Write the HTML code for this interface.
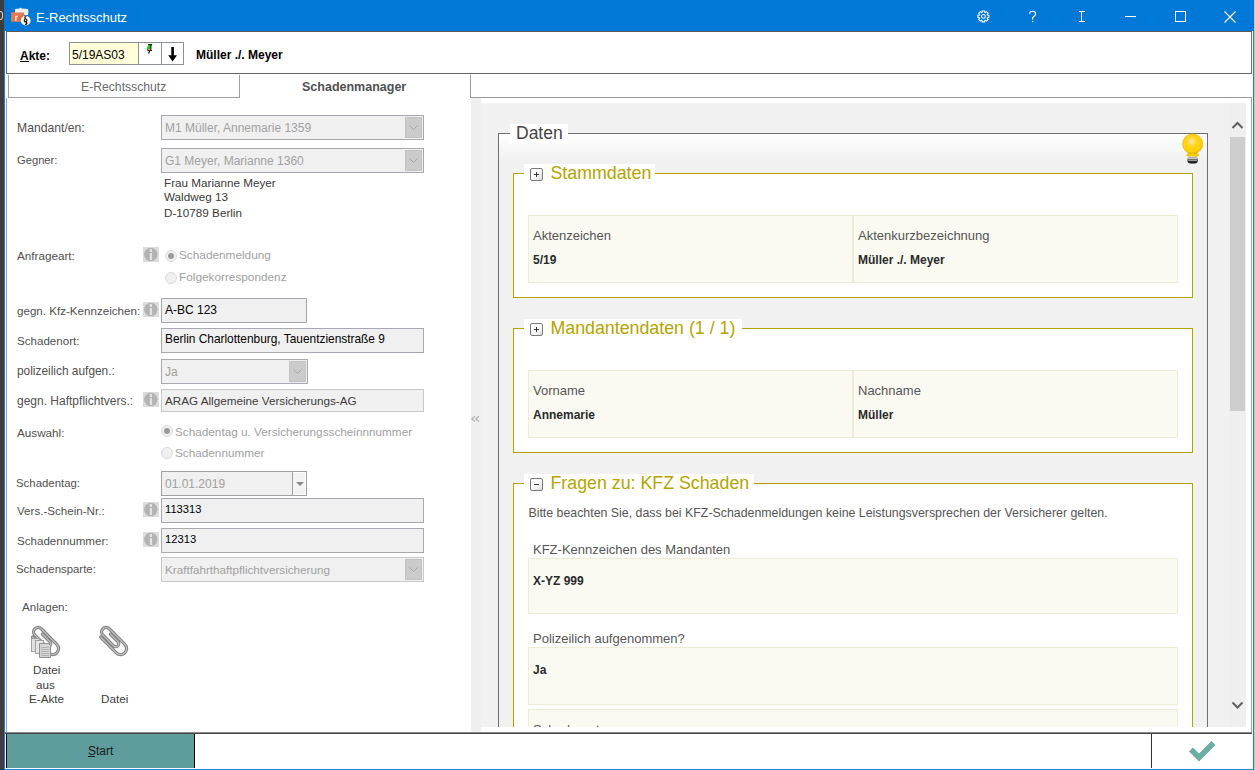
<!DOCTYPE html>
<html><head><meta charset="utf-8">
<style>
*{box-sizing:border-box;margin:0;padding:0}
html,body{width:1255px;height:770px;overflow:hidden;background:#fff;font-family:"Liberation Sans",sans-serif}
.a{position:absolute}
.t{position:absolute;white-space:nowrap;line-height:1}
#strip{left:0;top:0;width:4px;height:770px;background:#3d3d3d}
#win{left:4px;top:0;width:1250px;height:770px;background:#fff;border-left:1px solid #1a84d8;border-right:1px solid #1a84d8;border-bottom:1px solid #1a84d8}
#title{left:4px;top:0;width:1250px;height:31px;background:#0078d7}
.lbl{position:absolute;white-space:nowrap;line-height:1;font-size:12px;color:#505050}
.box{position:absolute;border:1px solid #a8a8b0;background:#f0f0f0}
.dd{position:absolute;background:#cbcbcb;border:1px solid #c2c2c2}
.dis{color:#a0a0a0}
.info{position:absolute;width:16px;height:15px;background:#dcdcdc}
.radio{position:absolute;width:12px;height:12px;border-radius:50%;border:1px solid #dadada;background:#f0f0f0}
.radio.on:after{content:"";position:absolute;left:2px;top:2px;width:6px;height:6px;border-radius:50%;background:#9a9a9a}
.pm{position:absolute;width:13px;height:13px;border:1px solid #7a7a7a;border-radius:2px;background:linear-gradient(135deg,#fff 40%,#dcdcdc)}
.h{font-family:"Liberation Sans",sans-serif}
</style></head><body>
<div id="strip" class="a"></div><div class="a" style="left:-2px;top:11px;width:5px;height:9px;border:1px solid #e0e0ea;border-radius:0 3px 3px 0;border-right-color:#e8d8a0"></div>
<div id="win" class="a"></div><div class="a" style="left:1254px;top:0;width:1px;height:770px;background:#c9c1b8"></div>
<div id="title" class="a"></div>
<div class="t" style="left:36px;top:11px;font-size:13px;color:#fff">E-Rechtsschutz</div>

<!-- Akte row -->
<div class="a" style="left:6px;top:31px;width:1246px;height:43px;border:1px solid #6a6a6a;border-bottom:1px solid #646464;border-top:1px solid #5a5a5a"></div>
<div class="t" style="left:20px;top:50px;font-size:12px;font-weight:bold;color:#000">Akte:</div>
<div class="a" style="left:20px;top:61px;width:9px;height:1px;background:#000"></div>
<div class="a" style="left:69px;top:42px;width:70px;height:23px;background:#ffffd9;border:1px solid #8c9398"></div>
<div class="t" style="left:72px;top:49px;font-size:12px;color:#000">5/19AS03</div>
<div class="a" style="left:138px;top:42px;width:24px;height:23px;background:#fff;border:1px solid #8c9398"></div>
<div class="a" style="left:161px;top:42px;width:23px;height:23px;background:#fff;border:1px solid #8c9398"></div>
<div class="t" style="left:196px;top:49px;font-size:12px;font-weight:bold;color:#000">Müller ./. Meyer</div>

<!-- tabs -->
<div class="a" style="left:8px;top:75px;width:232px;height:23px;border:1px solid #a0a0a0;border-top:none"></div>
<div class="t" style="left:81px;top:81px;font-size:12.2px;color:#6a6a6a">E-Rechtsschutz</div>
<div class="a" style="left:470px;top:75px;width:782px;height:23px;border-left:1px solid #999;border-bottom:1px solid #999"></div>
<div class="t" style="left:302px;top:80.7px;font-size:12.5px;font-weight:bold;color:#505050">Schadenmanager</div>

<!-- left panel border -->
<div class="a" style="left:6px;top:98px;width:1px;height:634px;background:#a0a0a0"></div>
<div class="a" style="left:1251px;top:97px;width:1px;height:635px;background:#a0a0a0"></div>

<!-- bottom bar -->
<div class="a" style="left:5px;top:732px;width:1247px;height:1px;background:#8a8a8a"></div><div class="a" style="left:5px;top:733px;width:1247px;height:1px;background:#454545"></div>
<div class="a" style="left:6px;top:734px;width:189px;height:34px;background:#5f9c9c;border-left:1px solid #000;border-right:1px solid #000"></div>
<div class="t" style="left:88px;top:745px;font-size:12px;color:#1a1a1a">Start</div><div class="a" style="left:88px;top:756px;width:7px;height:1px;background:#1a1a1a"></div>
<div class="a" style="left:1151px;top:734px;width:1px;height:34px;background:#333"></div>

<!-- right panel content -->
<div class="a" style="left:471px;top:98px;width:775px;height:629px;background:#f0f0f0"></div>
<div class="a" style="left:481px;top:98px;width:765px;height:5px;background:#fff"></div>


<!-- LEFT PANEL -->
<div class="lbl" style="left:17px;top:122px;font-size:12.2px">Mandant/en:</div>
<div class="box" style="left:161px;top:115px;width:263px;height:25px"></div>
<div class="dd" style="left:405px;top:117px;width:17px;height:21px"><svg width="15" height="19" style="position:absolute;left:0;top:0"><path d="M3.5,7.5 L7.5,11.5 L11.5,7.5" fill="none" stroke="#a3a3a3" stroke-width="1"/></svg></div>
<div class="t dis" style="left:165px;top:122px;font-size:12px">M1 Müller, Annemarie 1359</div>

<div class="lbl" style="left:17px;top:155px;font-size:11.2px">Gegner:</div>
<div class="box" style="left:161px;top:148px;width:263px;height:25px"></div>
<div class="dd" style="left:405px;top:150px;width:17px;height:21px"><svg width="15" height="19" style="position:absolute;left:0;top:0"><path d="M3.5,7.5 L7.5,11.5 L11.5,7.5" fill="none" stroke="#a3a3a3" stroke-width="1"/></svg></div>
<div class="t dis" style="left:165px;top:155px;font-size:12px">G1 Meyer, Marianne 1360</div>

<div class="t" style="left:164px;top:176.5px;font-size:11.7px;color:#3a3a3a">Frau Marianne Meyer</div>
<div class="t" style="left:164px;top:191px;font-size:11.7px;color:#3a3a3a">Waldweg 13</div>
<div class="t" style="left:164px;top:206.5px;font-size:11.7px;color:#3a3a3a">D-10789 Berlin</div>

<div class="lbl" style="left:17px;top:249.5px;font-size:11.7px">Anfrageart:</div>
<div class="info" style="left:143px;top:247px"><svg width="16" height="15" style="position:absolute;left:0;top:0"><circle cx="7.8" cy="7.5" r="6.7" fill="#b3b3b3"/><path d="M6.4,2.6 L8.1,1.9 H9 V4.9 H6.9 Z" fill="#e2e2e2"/><rect x="6.8" y="6.1" width="2.3" height="6.9" fill="#e2e2e2"/></svg></div>
<div class="radio on" style="left:165px;top:250px"></div>
<div class="t dis" style="left:179px;top:249.5px;font-size:11.8px">Schadenmeldung</div>
<div class="radio" style="left:165px;top:272px"></div>
<div class="t dis" style="left:179px;top:271.5px;font-size:11.8px">Folgekorrespondenz</div>

<div class="lbl" style="left:17px;top:304.5px;font-size:11.6px">gegn. Kfz-Kennzeichen:</div>
<div class="info" style="left:143px;top:302px"><svg width="16" height="15" style="position:absolute;left:0;top:0"><circle cx="7.8" cy="7.5" r="6.7" fill="#b3b3b3"/><path d="M6.4,2.6 L8.1,1.9 H9 V4.9 H6.9 Z" fill="#e2e2e2"/><rect x="6.8" y="6.1" width="2.3" height="6.9" fill="#e2e2e2"/></svg></div>
<div class="box" style="left:161px;top:298px;width:146px;height:25px"></div>
<div class="t" style="left:165px;top:304px;font-size:12px;color:#000">A-BC 123</div>

<div class="lbl" style="left:17px;top:334.5px;font-size:11.6px">Schadenort:</div>
<div class="box" style="left:161px;top:328px;width:263px;height:25px"></div>
<div class="t" style="left:165px;top:334px;font-size:11.9px;color:#000">Berlin Charlottenburg, Tauentzienstraße 9</div>

<div class="lbl" style="left:17px;top:365.5px;font-size:11.9px">polizeilich aufgen.:</div>
<div class="box" style="left:161px;top:359px;width:147px;height:25px"></div>
<div class="dd" style="left:289px;top:361px;width:17px;height:21px"><svg width="15" height="19" style="position:absolute;left:0;top:0"><path d="M3.5,7.5 L7.5,11.5 L11.5,7.5" fill="none" stroke="#a3a3a3" stroke-width="1"/></svg></div>
<div class="t dis" style="left:165px;top:365.5px;font-size:12px">Ja</div>

<div class="lbl" style="left:17px;top:395px;font-size:12px">gegn. Haftpflichtvers.:</div>
<div class="info" style="left:143px;top:392px"><svg width="16" height="15" style="position:absolute;left:0;top:0"><circle cx="7.8" cy="7.5" r="6.7" fill="#b3b3b3"/><path d="M6.4,2.6 L8.1,1.9 H9 V4.9 H6.9 Z" fill="#e2e2e2"/><rect x="6.8" y="6.1" width="2.3" height="6.9" fill="#e2e2e2"/></svg></div>
<div class="box" style="left:161px;top:389px;width:263px;height:23px;border-color:#c8c8c8"></div>
<div class="t" style="left:165px;top:394.5px;font-size:11.7px;color:#3c3c3c">ARAG Allgemeine Versicherungs-AG</div>

<div class="lbl" style="left:17px;top:427px;font-size:11.7px">Auswahl:</div>
<div class="radio on" style="left:161px;top:425px"></div>
<div class="t dis" style="left:175px;top:425.5px;font-size:11.75px">Schadentag u. Versicherungsscheinnnummer</div>
<div class="radio" style="left:161px;top:447px"></div>
<div class="t dis" style="left:175px;top:447px;font-size:11.75px">Schadennummer</div>

<div class="lbl" style="left:16px;top:478px;font-size:11.4px">Schadentag:</div>
<div class="box" style="left:161px;top:471px;width:146px;height:25px;border-color:#a0a0a0"></div>
<div class="a" style="left:292px;top:472px;width:1px;height:23px;background:#a0a0a0"></div>
<div class="a" style="left:293px;top:472px;width:13px;height:23px;background:#f3f3f3;border:1px solid #fff;border-left:none"></div><div class="a" style="left:295.5px;top:482px;width:0;height:0;border-left:4px solid transparent;border-right:4px solid transparent;border-top:4px solid #888"></div>
<div class="t dis" style="left:165px;top:477.5px;font-size:12px">01.01.2019</div>

<div class="lbl" style="left:17px;top:505px;font-size:11.6px">Vers.-Schein-Nr.:</div>
<div class="info" style="left:143px;top:502px"><svg width="16" height="15" style="position:absolute;left:0;top:0"><circle cx="7.8" cy="7.5" r="6.7" fill="#b3b3b3"/><path d="M6.4,2.6 L8.1,1.9 H9 V4.9 H6.9 Z" fill="#e2e2e2"/><rect x="6.8" y="6.1" width="2.3" height="6.9" fill="#e2e2e2"/></svg></div>
<div class="box" style="left:161px;top:498px;width:263px;height:25px"></div>
<div class="t" style="left:165px;top:504px;font-size:11.2px;color:#000">113313</div>

<div class="lbl" style="left:17px;top:535px;font-size:11.6px">Schadennummer:</div>
<div class="info" style="left:143px;top:532px"><svg width="16" height="15" style="position:absolute;left:0;top:0"><circle cx="7.8" cy="7.5" r="6.7" fill="#b3b3b3"/><path d="M6.4,2.6 L8.1,1.9 H9 V4.9 H6.9 Z" fill="#e2e2e2"/><rect x="6.8" y="6.1" width="2.3" height="6.9" fill="#e2e2e2"/></svg></div>
<div class="box" style="left:161px;top:528px;width:263px;height:25px"></div>
<div class="t" style="left:165px;top:534px;font-size:11.2px;color:#000">12313</div>

<div class="lbl" style="left:16px;top:564px;font-size:11.4px">Schadensparte:</div>
<div class="box" style="left:161px;top:557px;width:263px;height:25px;border-color:#c8c8c8"></div>
<div class="dd" style="left:405px;top:559px;width:17px;height:21px"><svg width="15" height="19" style="position:absolute;left:0;top:0"><path d="M3.5,7.5 L7.5,11.5 L11.5,7.5" fill="none" stroke="#a3a3a3" stroke-width="1"/></svg></div>
<div class="t dis" style="left:165px;top:563.5px;font-size:11.7px">Kraftfahrthaftpflichtversicherung</div>

<div class="lbl" style="left:22px;top:600.5px;font-size:11.6px">Anlagen:</div>
<div class="t" style="left:33px;top:663.5px;font-size:11.7px;color:#404040">Datei</div>
<div class="t" style="left:36px;top:678.5px;font-size:11.7px;color:#404040">aus</div>
<div class="t" style="left:29px;top:693px;font-size:11.7px;color:#404040">E-Akte</div>
<div class="t" style="left:101px;top:693px;font-size:11.7px;color:#404040">Datei</div>



<svg class="a" style="left:94px;top:622px" width="40" height="40" viewBox="0 0 40 40">
  <g transform="translate(20,20) rotate(-45)">
    <path d="M-6,-13 V9.3 A6,6 0 0 0 6,9.3 V-12.7 A4.5,4.5 0 0 0 -3,-12.7 V2.4 A3,3 0 0 0 3,2.4 V-8" fill="none" stroke="#878787" stroke-width="3.3" stroke-linecap="round"/>
    <path d="M-6,-13 V9.3 A6,6 0 0 0 6,9.3 V-12.7 A4.5,4.5 0 0 0 -3,-12.7 V2.4 A3,3 0 0 0 3,2.4 V-8" fill="none" stroke="#c8c8c8" stroke-width="1" stroke-linecap="round"/>
  </g>
</svg>
<svg class="a" style="left:26px;top:622px" width="40" height="40" viewBox="0 0 40 40">
  <g transform="translate(20,20) rotate(-45)">
    <path d="M-6,-13 V9.3 A6,6 0 0 0 6,9.3 V-12.7 A4.5,4.5 0 0 0 -3,-12.7 V2.4 A3,3 0 0 0 3,2.4 V-8" fill="none" stroke="#878787" stroke-width="3.3" stroke-linecap="round"/>
    <path d="M-6,-13 V9.3 A6,6 0 0 0 6,9.3 V-12.7 A4.5,4.5 0 0 0 -3,-12.7 V2.4 A3,3 0 0 0 3,2.4 V-8" fill="none" stroke="#c8c8c8" stroke-width="1" stroke-linecap="round"/>
  </g>
  <rect x="5.5" y="16.5" width="8" height="13" fill="#e0e0e0" stroke="#a0a0a0" stroke-width="1"/>
  <rect x="9.5" y="18.5" width="8" height="13" fill="#e4e4e4" stroke="#a0a0a0" stroke-width="1"/>
  <path d="M13.5,21.5 H22.5 L24.5,23.5 V35.5 H13.5 Z" fill="#d6d6d6" stroke="#909090" stroke-width="1"/>
  <path d="M15,25.5 H23 M15,27.5 H23 M15,29.5 H23 M15,31.5 H23 M15,33.5 H23" stroke="#a8a8a8" stroke-width="0.8"/>
</svg>

<!-- RIGHT PANEL -->
<div class="a" style="left:471px;top:98px;width:10px;height:634px;background:#efefef"></div>
<svg class="a" style="left:470px;top:415px" width="11" height="8"><path d="M5,1.2 L1.8,3.9 L5,6.6 M9,1.2 L5.8,3.9 L9,6.6" fill="none" stroke="#b2b2b2" stroke-width="1.3"/></svg>
<div id="clip" class="a" style="left:481px;top:103px;width:748px;height:624px;overflow:hidden;background:#f1f1f1">
  <!-- Daten box (coords relative to 481,103) -->
  <div class="a" style="left:17px;top:30px;width:710px;height:700px;border:1px solid #6e6e6e;border-bottom:none;background:linear-gradient(#ffffff 0px,#f1f1f1 26px)"></div>
  <div class="a" style="left:29px;top:21px;width:58px;height:20px;background:#fff"></div>
  <div class="t" style="left:35px;top:22.2px;font-size:17.5px;color:#454545">Daten</div>

  <div class="a" style="left:32px;top:70px;width:680px;height:125px;border:1px solid #b5a400;background:#fff"></div>
  <div class="a" style="left:43px;top:61px;width:131px;height:20px;background:#fff"></div>
  <div class="pm" style="left:49px;top:65px"><div class="a" style="left:3px;top:5px;width:5px;height:1px;background:#333"></div><div class="a" style="left:5px;top:3px;width:1px;height:5px;background:#333"></div></div>
  <div class="t" style="left:69.5px;top:61.6px;font-size:17.8px;color:#b5a400">Stammdaten</div>
  <div class="a" style="left:47px;top:112px;width:650px;height:68px;border:1px solid #efebd6;background:#fafaf3"></div>
  <div class="a" style="left:371px;top:112px;width:2px;height:68px;background:#efebd6"></div>
  <div class="t" style="left:52px;top:125.8px;font-size:13px;color:#555">Aktenzeichen</div>
  <div class="t" style="left:52px;top:151px;font-size:12px;font-weight:bold;color:#2a2a2a">5/19</div>
  <div class="t" style="left:377px;top:125.8px;font-size:13px;color:#555">Aktenkurzbezeichnung</div>
  <div class="t" style="left:377px;top:151px;font-size:12px;font-weight:bold;color:#2a2a2a">Müller ./. Meyer</div>
  <div class="a" style="left:32px;top:225px;width:680px;height:125px;border:1px solid #b5a400;background:#fff"></div>
  <div class="a" style="left:43px;top:216px;width:218px;height:20px;background:#fff"></div>
  <div class="pm" style="left:49px;top:220px"><div class="a" style="left:3px;top:5px;width:5px;height:1px;background:#333"></div><div class="a" style="left:5px;top:3px;width:1px;height:5px;background:#333"></div></div>
  <div class="t" style="left:69.5px;top:216.6px;font-size:17.8px;color:#b5a400">Mandantendaten (1 / 1)</div>
  <div class="a" style="left:47px;top:267px;width:650px;height:68px;border:1px solid #efebd6;background:#fafaf3"></div>
  <div class="a" style="left:371px;top:267px;width:2px;height:68px;background:#efebd6"></div>
  <div class="t" style="left:52px;top:280.8px;font-size:13px;color:#555">Vorname</div>
  <div class="t" style="left:52px;top:306px;font-size:12px;font-weight:bold;color:#2a2a2a">Annemarie</div>
  <div class="t" style="left:377px;top:280.8px;font-size:13px;color:#555">Nachname</div>
  <div class="t" style="left:377px;top:306px;font-size:12px;font-weight:bold;color:#2a2a2a">Müller</div>
  <div class="a" style="left:32px;top:380px;width:680px;height:400px;border:1px solid #b5a400;background:#fff"></div>
  <div class="a" style="left:43px;top:371px;width:230px;height:20px;background:#fff"></div>
  <div class="pm" style="left:49px;top:375px"><div class="a" style="left:3px;top:5px;width:5px;height:1px;background:#333"></div></div>
  <div class="t" style="left:69.5px;top:371.6px;font-size:17.8px;color:#b5a400">Fragen zu: KFZ Schaden</div>
  <div class="t" style="left:47.4px;top:404px;font-size:12.37px;color:#555">Bitte beachten Sie, dass bei KFZ-Schadenmeldungen keine Leistungsversprechen der Versicherer gelten.</div>
  <div class="t" style="left:52px;top:440px;font-size:13px;color:#555">KFZ-Kennzeichen des Mandanten</div>
  <div class="a" style="left:47px;top:455px;width:650px;height:56px;border:1px solid #efebd6;background:#fafaf3"></div>
  <div class="t" style="left:52px;top:472px;font-size:12px;font-weight:bold;color:#2a2a2a">X-YZ 999</div>
  <div class="t" style="left:52px;top:529px;font-size:13px;color:#555">Polizeilich aufgenommen?</div>
  <div class="a" style="left:47px;top:544px;width:650px;height:58px;border:1px solid #efebd6;background:#fafaf3"></div>
  <div class="t" style="left:52px;top:560.5px;font-size:12px;font-weight:bold;color:#2a2a2a">Ja</div>
  <div class="a" style="left:47px;top:606px;width:650px;height:58px;border:1px solid #efebd6;background:#fafaf3"></div>
  <div class="t" style="left:52px;top:619.5px;font-size:13px;color:#555">Schadenort</div>

  <!-- bulb -->
  <svg class="a" style="left:699px;top:29px" width="26" height="36" viewBox="0 0 26 36">
    <defs>
      <radialGradient id="bg1" cx="0.45" cy="0.38" r="0.62">
        <stop offset="0" stop-color="#ffe9a0"/>
        <stop offset="0.45" stop-color="#ffd21a"/>
        <stop offset="0.85" stop-color="#ffd000"/>
        <stop offset="1" stop-color="#eeb000"/>
      </radialGradient>
      <linearGradient id="bs" x1="0" y1="0" x2="0" y2="1">
        <stop offset="0" stop-color="#d8d8d8"/><stop offset="0.35" stop-color="#888"/><stop offset="0.6" stop-color="#333"/><stop offset="1" stop-color="#111"/>
      </linearGradient>
    </defs>
    <path d="M8,19 L17.2,19 L16.8,23.5 L8.4,23.5 Z" fill="#ffc800"/>
    <circle cx="12.6" cy="11.9" r="10" fill="url(#bg1)" stroke="#f0b000" stroke-width="0.7"/>
    <ellipse cx="12.6" cy="23" rx="6" ry="1.9" fill="#f5d000" stroke="#d8a800" stroke-width="0.6"/>
    <rect x="7.3" y="24.3" width="10.6" height="7.2" rx="3.5" fill="url(#bs)"/>
    <path d="M7.8,26.4 H17.4 M8.3,28.4 H16.9" stroke="#e0e0e0" stroke-width="0.7"/>
  </svg>
</div>


<!-- scrollbar -->
<div class="a" style="left:1229px;top:103px;width:17px;height:624px;background:#efefef"></div>
<div class="a" style="left:1230px;top:137px;width:15px;height:274px;background:#cdcdcd"></div>
<svg class="a" style="left:1229px;top:119px" width="17" height="12"><path d="M3.5,9 L8.5,4 L13.5,9" fill="none" stroke="#606060" stroke-width="2"/></svg>
<svg class="a" style="left:1229px;top:699px" width="17" height="12"><path d="M3.5,3.5 L8.5,8.5 L13.5,3.5" fill="none" stroke="#606060" stroke-width="2"/></svg>

<!-- title bar icons -->
<svg class="a" style="left:976px;top:9px" width="15" height="15"><path d="M12.87,6.18 L12.87,8.62 L11.24,8.84 L11.13,9.09 L12.13,10.40 L10.40,12.13 L9.09,11.13 L8.84,11.24 L8.62,12.87 L6.18,12.87 L5.96,11.24 L5.71,11.13 L4.40,12.13 L2.67,10.40 L3.67,9.09 L3.56,8.84 L1.93,8.62 L1.93,6.18 L3.56,5.96 L3.67,5.71 L2.67,4.40 L4.40,2.67 L5.71,3.67 L5.96,3.56 L6.18,1.93 L8.62,1.93 L8.84,3.56 L9.09,3.67 L10.40,2.67 L12.13,4.40 L11.13,5.71 L11.24,5.96 Z" fill="none" stroke="#fff" stroke-width="1.05"/><circle cx="7.4" cy="7.4" r="1.9" fill="none" stroke="#fff" stroke-width="1.05"/></svg>
<svg class="a" style="left:1027px;top:10px" width="12" height="13"><path d="M2.6,3.8 C2.6,2 4,1.3 5.6,1.3 C7.4,1.3 8.6,2.4 8.6,3.9 C8.6,5.6 7.4,6.1 6.3,7 C5.8,7.4 5.6,7.9 5.6,8.6 V9.4" fill="none" stroke="#fff" stroke-width="1.1"/><rect x="5" y="10.9" width="1.3" height="1.2" fill="#fff"/></svg>
<div class="a" style="left:1079px;top:11px;width:6px;height:1px;background:#fff"></div><div class="a" style="left:1081px;top:11px;width:1px;height:11px;background:#fff"></div><div class="a" style="left:1079px;top:21px;width:6px;height:1px;background:#fff"></div>
<div class="a" style="left:1125px;top:16px;width:11px;height:1px;background:#fff"></div>
<div class="a" style="left:1175px;top:11px;width:11px;height:11px;border:1px solid #fff"></div>
<svg class="a" style="left:1223px;top:10px" width="14" height="14"><path d="M1.5,1.5 L12.5,12.5 M12.5,1.5 L1.5,12.5" stroke="#fff" stroke-width="1.1"/></svg>

<!-- app icon -->
<svg class="a" style="left:8px;top:4px" width="28" height="26" viewBox="0 0 28 26">
  <path d="M7,5 L11.5,4.5 L12.5,3.6 L13.5,4.5 L19.5,5 L20.5,6.5 L20,11 L7,11 Z" fill="#f0f0f0"/>
  <path d="M3,8.5 L6,8 L7,8.5 L16,8.5 L16,17.7 L3,17.7 Z" fill="#e27a50"/>
  <path d="M7.8,17 V12.5 H10" stroke="#fbe8c8" stroke-width="1.4" fill="none"/>
  <path d="M9.5,13 H14 M9.5,15.5 H14" stroke="#d06040" stroke-width="1" fill="none"/>
  <circle cx="17.7" cy="16.6" r="4.9" fill="#fafafa"/>
  <path d="M18.4,12.5 C16.6,12.4 16.3,14.3 17.8,15 C19.6,15.8 19.3,17.4 17.6,17.6 M17,15.3 C15.6,16.2 16.2,17.8 18,18.2 C19.4,18.6 19.2,20.6 17,20.4" fill="none" stroke="#111" stroke-width="1.2"/>
</svg>

<!-- pin & arrow -->
<svg class="a" style="left:146px;top:43px" width="9" height="11" viewBox="0 0 9 11">
  <rect x="2" y="1" width="4" height="1.2" fill="#2a2a00"/><rect x="5" y="1" width="1.2" height="1.2" fill="#000090"/>
  <path d="M2.5,2 H4.8 V6.5 H1 V4.5 Z" fill="#10d010"/>
  <rect x="4.4" y="2" width="1" height="4.5" fill="#000"/>
  <rect x="1" y="6" width="1.3" height="1.3" fill="#ff2000"/><rect x="4" y="5.5" width="1.2" height="1.2" fill="#e00000"/>
  <rect x="1.5" y="7" width="4.5" height="1" fill="#202000"/>
  <path d="M3.6,8 L2.6,10.5" stroke="#000" stroke-width="1.1"/>
</svg>
<svg class="a" style="left:166px;top:46px" width="13" height="17" viewBox="0 0 13 17">
  <path d="M5.3,1 H7.9 V9.3 H11 L6.6,15.5 L2.2,9.3 H5.3 Z" fill="#000"/>
</svg>

<!-- checkmark -->
<svg class="a" style="left:1185px;top:736px" width="34" height="30" viewBox="0 0 34 30">
  <path d="M6,13.5 L14,21.5 L28.5,7" fill="none" stroke="#6aaea3" stroke-width="5.6"/>
</svg>

</body></html>
